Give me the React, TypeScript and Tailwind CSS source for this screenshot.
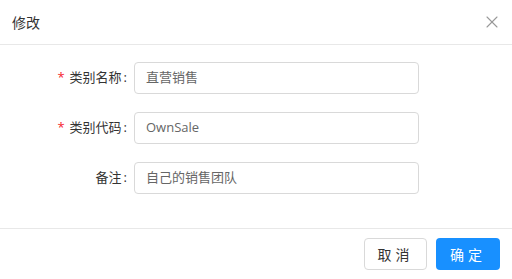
import { X } from "lucide-react"

const rows = [
  { label: "类别名称", value: "直营销售", required: true },
  { label: "类别代码", value: "OwnSale", required: true },
  { label: "备注", value: "自己的销售团队", required: false },
]

export default function App() {
  return (
    <div
      className="flex h-[279px] w-[512px] flex-col bg-white text-[13px] text-[#333]"
      style={{ fontFamily: '"Open Sans", "Noto Sans CJK SC", sans-serif' }}
    >
      {/* Header */}
      <div className="flex h-[45px] shrink-0 items-center justify-between border-b border-[#e8e8e8] pl-3 pr-[10px]">
        <span className="text-[14px] text-[#333]">修改</span>
        <X className="h-[20px] w-[20px] text-[#999]" strokeWidth={1.3} />
      </div>

      {/* Form */}
      <div className="flex flex-1 flex-col gap-[18px] pt-[17px]">
        {rows.map((row) => (
          <div key={row.label} className="flex items-center">
            <label className="flex w-[134px] shrink-0 items-center justify-end pr-[7px] text-[#333]">
              {row.required && <span className="mr-[5px] text-[#f5222d]">*</span>}
              {row.label}
              <span className="ml-[2px]">:</span>
            </label>
            <div className="flex h-[32px] w-[285px] items-center rounded-[4px] border border-[#d9d9d9] px-[11px] text-[#666]">
              {row.value}
            </div>
          </div>
        ))}
      </div>

      {/* Footer */}
      <div className="flex h-[51px] shrink-0 items-center justify-end gap-[9px] border-t border-[#e8e8e8] pr-3">
        <button className="h-[32px] w-[63px] rounded-[4px] border border-[#d9d9d9] bg-white text-[14px] tracking-[4px] text-[#333]">
          取消
        </button>
        <button className="h-[32px] w-[64px] rounded-[4px] bg-[#1890ff] text-[14px] tracking-[4px] text-white">
          确定
        </button>
      </div>
    </div>
  )
}
